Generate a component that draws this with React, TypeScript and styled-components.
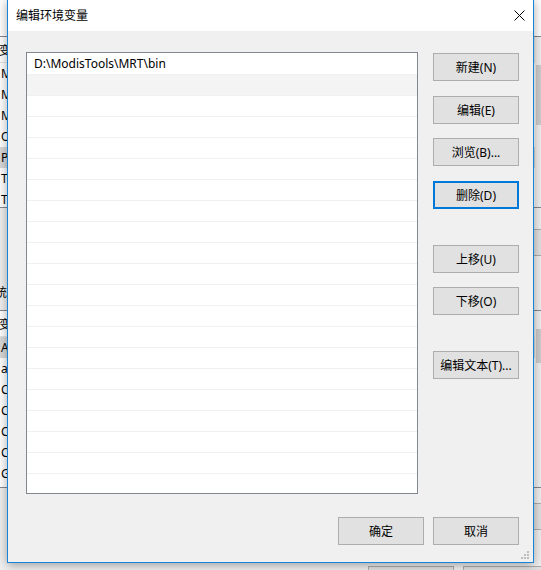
import React from "react";
import styled, { createGlobalStyle } from "styled-components";

const FONT = `"Noto Sans", "Noto Sans CJK SC", sans-serif`;

const GlobalStyle = createGlobalStyle`
  html, body { margin: 0; padding: 0; background: #f0f0f0; overflow: hidden; }
  * { box-sizing: border-box; }
  body { font-family: ${FONT}; font-size: 12px; color: #000; }
`;

const Desktop = styled.div`
  position: relative;
  width: 541px;
  height: 570px;
  overflow: hidden;
  background: #f0f0f0;
`;

/* ---------- parent window (环境变量), mostly hidden behind the dialog ---------- */
const ParentWindow = styled.div`
  position: absolute;
  left: -29px;
  top: 0;
  width: 594px;
  height: 620px;
  background: #f0f0f0;
  display: flex;
  flex-direction: column;
`;

const ParentTitle = styled.div`
  height: 36px;
  flex-shrink: 0;
  background: #fff;
`;

const ParentBody = styled.div`
  padding: 0 12px;
  display: flex;
  flex-direction: column;
`;

const VarList = styled.div<{ $h: number; $mt: number }>`
  margin-left: 9px;
  margin-top: ${(p) => p.$mt}px;
  height: ${(p) => p.$h}px;
  border: 1px solid #828790;
  background: #fff;
  display: flex;
  overflow: hidden;
  flex-shrink: 0;
`;

const VarListContent = styled.div`
  flex: 1;
  min-width: 0;
  display: flex;
  flex-direction: column;
`;

const VarHeader = styled.div`
  height: 26px;
  flex-shrink: 0;
  display: flex;
  border-bottom: 1px solid #e5e5e5;
`;

const HeaderCell = styled.div<{ $w?: number }>`
  width: ${(p) => (p.$w ? `${p.$w}px` : "auto")};
  flex: ${(p) => (p.$w ? "none" : "1")};
  padding-left: 6px;
  display: flex;
  align-items: center;
  border-right: 1px solid #e5e5e5;
  white-space: nowrap;
`;

const VarRow = styled.div<{ $sel?: boolean }>`
  height: 21px;
  flex-shrink: 0;
  display: flex;
  align-items: center;
  background: ${(p) => (p.$sel ? "#d9d9d9" : "#fff")};
`;

const VarCell = styled.div<{ $w?: number }>`
  width: ${(p) => (p.$w ? `${p.$w}px` : "auto")};
  flex: ${(p) => (p.$w ? "none" : "1")};
  padding-left: 8px;
  white-space: nowrap;
  overflow: hidden;
`;

const ScrollBar = styled.div`
  width: 17px;
  flex-shrink: 0;
  background: #f0f0f0;
  display: flex;
  flex-direction: column;
  align-items: center;
`;

const ScrollThumb = styled.div<{ $mt: number; $h: number }>`
  margin-top: ${(p) => p.$mt}px;
  width: 15px;
  height: ${(p) => p.$h}px;
  background: #cdcdcd;
`;

const ParentButtonRow = styled.div<{ $mt: number; $pr?: number }>`
  margin-top: ${(p) => p.$mt}px;
  padding-right: ${(p) => p.$pr ?? 0}px;
  display: flex;
  justify-content: flex-end;
  gap: 9px;
  flex-shrink: 0;
`;

const ParentButton = styled.div<{ $h?: number }>`
  width: 86px;
  height: ${(p) => p.$h ?? 27}px;
  background: #e1e1e1;
  border: 1px solid #adadad;
`;

const SectionLabel = styled.div`
  margin-top: 28px;
  height: 18px;
  line-height: 18px;
  white-space: nowrap;
`;

/* ---------- front dialog (编辑环境变量) ---------- */
const Dialog = styled.div`
  position: absolute;
  left: 7px;
  top: -1px;
  width: 527px;
  height: 564px;
  border: 1px solid #1883d7;
  background: #f0f0f0;
  box-shadow: 0 2px 10px rgba(0, 0, 0, 0.35);
  display: flex;
  flex-direction: column;
`;

const TitleBar = styled.div`
  height: 31px;
  flex-shrink: 0;
  background: #fff;
  display: flex;
  align-items: center;
  justify-content: space-between;
  padding-left: 8px;
`;

const TitleText = styled.span`
  font-size: 12px;
  line-height: 16px;
  color: #000;
`;

const CloseButton = styled.div`
  width: 28px;
  height: 31px;
  display: flex;
  align-items: center;
  justify-content: center;
`;

const Body = styled.div`
  flex: 1;
  display: flex;
  flex-direction: column;
  padding: 21px 14px 0 18px;
`;

const MainRow = styled.div`
  display: flex;
  align-items: flex-start;
`;

const ListBox = styled.div`
  width: 392px;
  height: 442px;
  border: 1px solid #828790;
  background: #fff;
  display: flex;
  flex-direction: column;
  overflow: hidden;
`;

const PathRow = styled.div<{ $sel?: boolean }>`
  height: 21px;
  flex-shrink: 0;
  display: flex;
  align-items: center;
  padding-left: 7px;
  background: ${(p) => (p.$sel ? "#f4f4f4" : "#fff")};
  & + & {
    border-top: 1px solid #f0f0f0;
  }
`;

const ButtonColumn = styled.div`
  margin-left: 15px;
  display: flex;
  flex-direction: column;
  width: 86px;
`;

const Button = styled.div<{ $mt?: number; $focused?: boolean }>`
  margin-top: ${(p) => p.$mt ?? 0}px;
  width: 86px;
  height: 28px;
  background: #e1e1e1;
  border: ${(p) => (p.$focused ? "2px solid #0078d7" : "1px solid #adadad")};
  display: flex;
  align-items: center;
  justify-content: center;
  font-size: 12px;
  white-space: nowrap;
  color: #000;
`;

const Footer = styled.div`
  margin-top: 23px;
  display: flex;
  justify-content: flex-end;
  gap: 9px;
`;

const Grip = styled.svg`
  position: absolute;
  right: 2px;
  bottom: 1px;
`;

const userVars = ["MOZ_PLUGIN_PATH", "MSMPI_INC", "MSMPI_LIB64", "OneDrive", "Path", "TEMP", "TMP"];
const sysVars = ["ACSvcPort", "asl.log", "CATALINA_HOME", "CLASSPATH", "ComSpec", "CONDA_HOME", "GISBASE"];

const rowCount = 21;

export default function App() {
  return (
    <>
      <GlobalStyle />
      <Desktop>
        <ParentWindow>
          <ParentTitle />
          <ParentBody>
            <VarList $h={172} $mt={0}>
              <VarListContent>
                <VarHeader>
                  <HeaderCell $w={170}>变量</HeaderCell>
                  <HeaderCell />
                </VarHeader>
                {userVars.map((k) => (
                  <VarRow key={k} $sel={k === "Path"}>
                    <VarCell $w={170}>{k}</VarCell>
                    <VarCell />
                  </VarRow>
                ))}
              </VarListContent>
              <ScrollBar>
                <ScrollThumb $mt={28} $h={60} />
              </ScrollBar>
            </VarList>
            <ParentButtonRow $mt={21}>
              <ParentButton />
              <ParentButton />
              <ParentButton />
            </ParentButtonRow>
            <SectionLabel>系统变量(S)</SectionLabel>
            <VarList $h={178} $mt={8}>
              <VarListContent>
                <VarHeader>
                  <HeaderCell $w={170}>变量</HeaderCell>
                  <HeaderCell />
                </VarHeader>
                {sysVars.map((k) => (
                  <VarRow key={k} $sel={k === "ACSvcPort"}>
                    <VarCell $w={170}>{k}</VarCell>
                    <VarCell />
                  </VarRow>
                ))}
              </VarListContent>
              <ScrollBar>
                <ScrollThumb $mt={18} $h={34} />
              </ScrollBar>
            </VarList>
            <ParentButtonRow $mt={15}>
              <ParentButton />
              <ParentButton />
              <ParentButton />
            </ParentButtonRow>
            <ParentButtonRow $mt={36} $pr={4}>
              <ParentButton $h={28} />
              <ParentButton $h={28} />
            </ParentButtonRow>
          </ParentBody>
        </ParentWindow>

        <Dialog>
          <TitleBar>
            <TitleText>编辑环境变量</TitleText>
            <CloseButton>
              <svg width="11" height="11" viewBox="0 0 11 11">
                <path d="M0.5 0.5 L10.5 10.5 M10.5 0.5 L0.5 10.5" stroke="#000" strokeWidth="1" fill="none" />
              </svg>
            </CloseButton>
          </TitleBar>
          <Body>
            <MainRow>
              <ListBox>
                {Array.from({ length: rowCount }).map((_, i) => (
                  <PathRow key={i} $sel={i === 1}>
                    {i === 0 ? "D:\\ModisTools\\MRT\\bin" : ""}
                  </PathRow>
                ))}
              </ListBox>
              <ButtonColumn>
                <Button $mt={1}>新建(N)</Button>
                <Button $mt={15}>编辑(E)</Button>
                <Button $mt={14}>浏览(B)...</Button>
                <Button $mt={15} $focused>删除(D)</Button>
                <Button $mt={36}>上移(U)</Button>
                <Button $mt={14}>下移(O)</Button>
                <Button $mt={36}>编辑文本(T)...</Button>
              </ButtonColumn>
            </MainRow>
            <Footer>
              <Button>确定</Button>
              <Button>取消</Button>
            </Footer>
          </Body>
          <Grip width="10" height="10" viewBox="0 0 10 10">
            <rect x="6" y="0" width="2" height="2" fill="#bdbdbd" />
            <rect x="3" y="3" width="2" height="2" fill="#bdbdbd" />
            <rect x="6" y="3" width="2" height="2" fill="#bdbdbd" />
            <rect x="0" y="6" width="2" height="2" fill="#bdbdbd" />
            <rect x="3" y="6" width="2" height="2" fill="#bdbdbd" />
            <rect x="6" y="6" width="2" height="2" fill="#bdbdbd" />
          </Grip>
        </Dialog>
      </Desktop>
    </>
  );
}
